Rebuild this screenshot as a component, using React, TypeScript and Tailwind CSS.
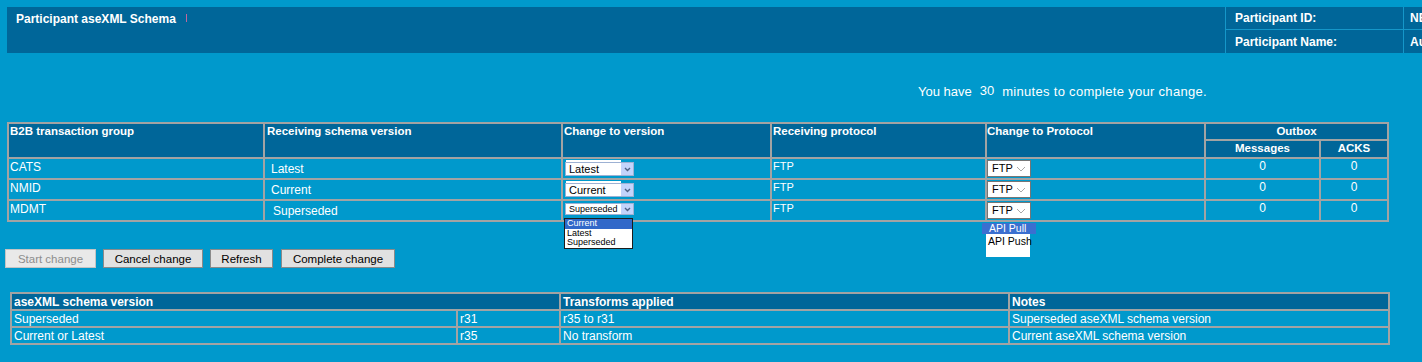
import { ReactNode } from "react";

const groups = [
  { name: "CATS", current: "Latest", change: "Latest", pad: "pl-[6px]" },
  { name: "NMID", current: "Current", change: "Current", pad: "pl-[6px]" },
  { name: "MDMT", current: "Superseded", change: "Superseded", pad: "pl-[8px]" },
];

const versions = [
  { label: "Superseded", release: "r31", transform: "r35 to r31", note: "Superseded aseXML schema version" },
  { label: "Current or Latest", release: "r35", transform: "No transform", note: "Current aseXML schema version" },
];

function XpSelect({ value, open }: { value: string; open?: boolean }) {
  return (
    <div className="relative">
      <div
        className={`flex w-[69px] border border-[#9db1d3] bg-white ${open ? "h-[12px]" : "h-[14px]"}`}
      >
        <span
          className={`flex-1 pl-[3px] text-black ${open ? "text-[9px] leading-[10px]" : "text-[11px] leading-[12px]"}`}
        >
          {value}
        </span>
        <span className="flex w-[13px] items-center justify-center border-l border-white bg-[#c3d4fb]">
          <svg width="7" height="5" viewBox="0 0 7 5">
            <path d="M1 1 L3.5 3.5 L6 1" fill="none" stroke="#4d6185" strokeWidth="1.4" />
          </svg>
        </span>
      </div>
      {open && (
        <div className="absolute left-[-1px] top-[15px] z-10 w-[69px] border border-[#1c1c1c] bg-white text-[9px] leading-[9.5px] text-black">
          <div className="bg-[#3168c9] pl-[2px] text-white">Current</div>
          <div className="pl-[2px]">Latest</div>
          <div className="pl-[2px]">Superseded</div>
        </div>
      )}
    </div>
  );
}

function ProtocolSelect({ open }: { open?: boolean }) {
  return (
    <div className="relative">
      <div className="flex h-[17px] w-[44px] items-center border border-[#767676] bg-white">
        <span className="flex-1 pl-[4px] text-[11px] leading-[13px] text-black">FTP</span>
        <svg className="mr-[4px]" width="10" height="6" viewBox="0 0 10 6">
          <path d="M1 1 L5 5 L9 1" fill="none" stroke="#a8a8a8" strokeWidth="1" />
        </svg>
      </div>
      {open && (
        <div className="absolute left-[-5px] top-[21px] z-10 whitespace-nowrap text-[10.5px] leading-[11px]">
          <div className="w-[54px] bg-[#3b6fd0] pl-[7px] text-white">API Pull</div>
          <div className="ml-[4px] h-[23px] w-[44px] bg-white pl-[2px] pt-[2px] text-black">API Push</div>
        </div>
      )}
    </div>
  );
}

function Th({ children, className = "", ...rest }: { children: ReactNode; className?: string; rowSpan?: number; colSpan?: number }) {
  return (
    <th
      {...rest}
      className={`border-2 border-[#a3a3a3] bg-[#006699] p-0 align-top text-[11.5px] font-bold leading-[14px] ${className}`}
    >
      {children}
    </th>
  );
}

const td = "border-2 border-[#a3a3a3] p-0 align-top";

export default function App() {
  return (
    <div className="h-[362px] w-[1422px] overflow-hidden bg-[#0099cc] font-['Liberation_Sans',Arial,sans-serif] text-white">
      {/* page header */}
      <div className="pl-[7px] pt-[7px]">
        <div className="flex h-[46px] w-[1500px] bg-[#006699]">
          <div className="flex w-[1218px] items-start pl-[9px] pt-[5px]">
            <span className="text-[12px] font-bold leading-[14px]">Participant aseXML Schema</span>
            <span className="ml-[10px] mt-[2px] h-[8px] w-px bg-[#c0679c]" />
          </div>
          <div className="grid flex-1 grid-cols-[178px_1fr] grid-rows-2 border-l border-[#1597c9] text-[12px] font-bold leading-[14px]">
            <div className="flex items-center border-b border-r border-[#1597c9] pl-[9px]">Participant ID:</div>
            <div className="flex items-center border-b border-[#1597c9] pl-[6px]">NE</div>
            <div className="flex items-center border-r border-[#1597c9] pl-[9px]">Participant Name:</div>
            <div className="flex items-center pl-[6px]">Au</div>
          </div>
        </div>
      </div>

      {/* timer */}
      <div className="mt-[31px] flex pl-[918px] text-[13px] leading-[16px]">
        <span>You have</span>
        <span className="mx-[8px] -mt-[1px]">30</span>
        <span className="tracking-[0.3px]">minutes to complete your change.</span>
      </div>

      {/* transaction groups */}
      <table className="ml-[7px] mt-[22px] w-[1380px] table-fixed border-collapse">
        <colgroup>
          <col className="w-[256px]" />
          <col className="w-[298px]" />
          <col className="w-[209px]" />
          <col className="w-[215px]" />
          <col className="w-[219px]" />
          <col className="w-[115px]" />
          <col className="w-[68px]" />
        </colgroup>
        <thead>
          <tr className="h-[17px]">
            <Th rowSpan={2} className="pl-[1px] text-left">B2B transaction group</Th>
            <Th rowSpan={2} className="pl-[2px] text-left">Receiving schema version</Th>
            <Th rowSpan={2} className="pl-[1px] text-left">Change to version</Th>
            <Th rowSpan={2} className="pl-[1px] text-left">Receiving protocol</Th>
            <Th rowSpan={2} className="text-left">Change to Protocol</Th>
            <Th colSpan={2} className="text-center">Outbox</Th>
          </tr>
          <tr className="h-[18px]">
            <Th className="text-center">Messages</Th>
            <Th className="text-center">ACKS</Th>
          </tr>
        </thead>
        <tbody>
          {groups.map((g, i) => (
            <tr key={g.name} className="h-[21px]">
              <td className={`${td} pl-[1px] text-[12px] leading-[16px]`}>{g.name}</td>
              <td className={`${td} ${g.pad} pt-[3px] text-[12px] leading-[14px]`}>{g.current}</td>
              <td className={td}>
                {i < 2 ? (
                  <div className="pt-[1px]">
                    <div className="ml-[3px] h-[2px] w-[55px] bg-white" />
                    <div className="ml-[2px]">
                      <XpSelect value={g.change} />
                    </div>
                  </div>
                ) : (
                  <div className="ml-[2px] pt-[2px]">
                    <XpSelect value={g.change} open />
                  </div>
                )}
              </td>
              <td className={`${td} pl-[1px] text-[11px] leading-[14px]`}>FTP</td>
              <td className={td}>
                <div className="mt-[1px]">
                  <ProtocolSelect open={i === 2} />
                </div>
              </td>
              <td className={`${td} text-center text-[12px] leading-[14px]`}>0</td>
              <td className={`${td} text-center text-[12px] leading-[14px]`}>0</td>
            </tr>
          ))}
        </tbody>
      </table>

      {/* actions */}
      <div className="ml-[5px] mt-[27px] flex gap-[7px] text-[11.5px] leading-[14px]">
        <button disabled className="h-[19px] w-[91px] border border-[#c4c4c4] bg-[#e9e9e9] text-[#8d8d8d]">
          Start change
        </button>
        <button className="h-[19px] w-[100px] border border-[#8a8a8a] bg-[#e1e1e1] text-black">Cancel change</button>
        <button className="h-[19px] w-[63px] border border-[#8a8a8a] bg-[#e1e1e1] text-black">Refresh</button>
        <button className="ml-[1px] h-[19px] w-[114px] border border-[#8a8a8a] bg-[#e1e1e1] text-black">
          Complete change
        </button>
      </div>

      {/* schema versions */}
      <table className="ml-[10px] mt-[24px] w-[1378px] table-fixed border-collapse text-[12px] leading-[14px]">
        <colgroup>
          <col className="w-[446px]" />
          <col className="w-[103px]" />
          <col className="w-[449px]" />
          <col className="w-[380px]" />
        </colgroup>
        <thead>
          <tr className="h-[17px]">
            <th colSpan={2} className="border-2 border-[#a3a3a3] bg-[#006699] p-0 pl-[2px] text-left font-bold">
              aseXML schema version
            </th>
            <th className="border-2 border-[#a3a3a3] bg-[#006699] p-0 pl-[2px] text-left font-bold">Transforms applied</th>
            <th className="border-2 border-[#a3a3a3] bg-[#006699] p-0 pl-[2px] text-left font-bold">Notes</th>
          </tr>
        </thead>
        <tbody>
          {versions.map((v) => (
            <tr key={v.release} className="h-[17px]">
              <td className="border-2 border-[#a3a3a3] p-0 pl-[2px]">{v.label}</td>
              <td className="border-2 border-[#a3a3a3] p-0 pl-[2px]">{v.release}</td>
              <td className="border-2 border-[#a3a3a3] p-0 pl-[2px]">{v.transform}</td>
              <td className="border-2 border-[#a3a3a3] p-0 pl-[2px]">{v.note}</td>
            </tr>
          ))}
        </tbody>
      </table>
    </div>
  );
}
